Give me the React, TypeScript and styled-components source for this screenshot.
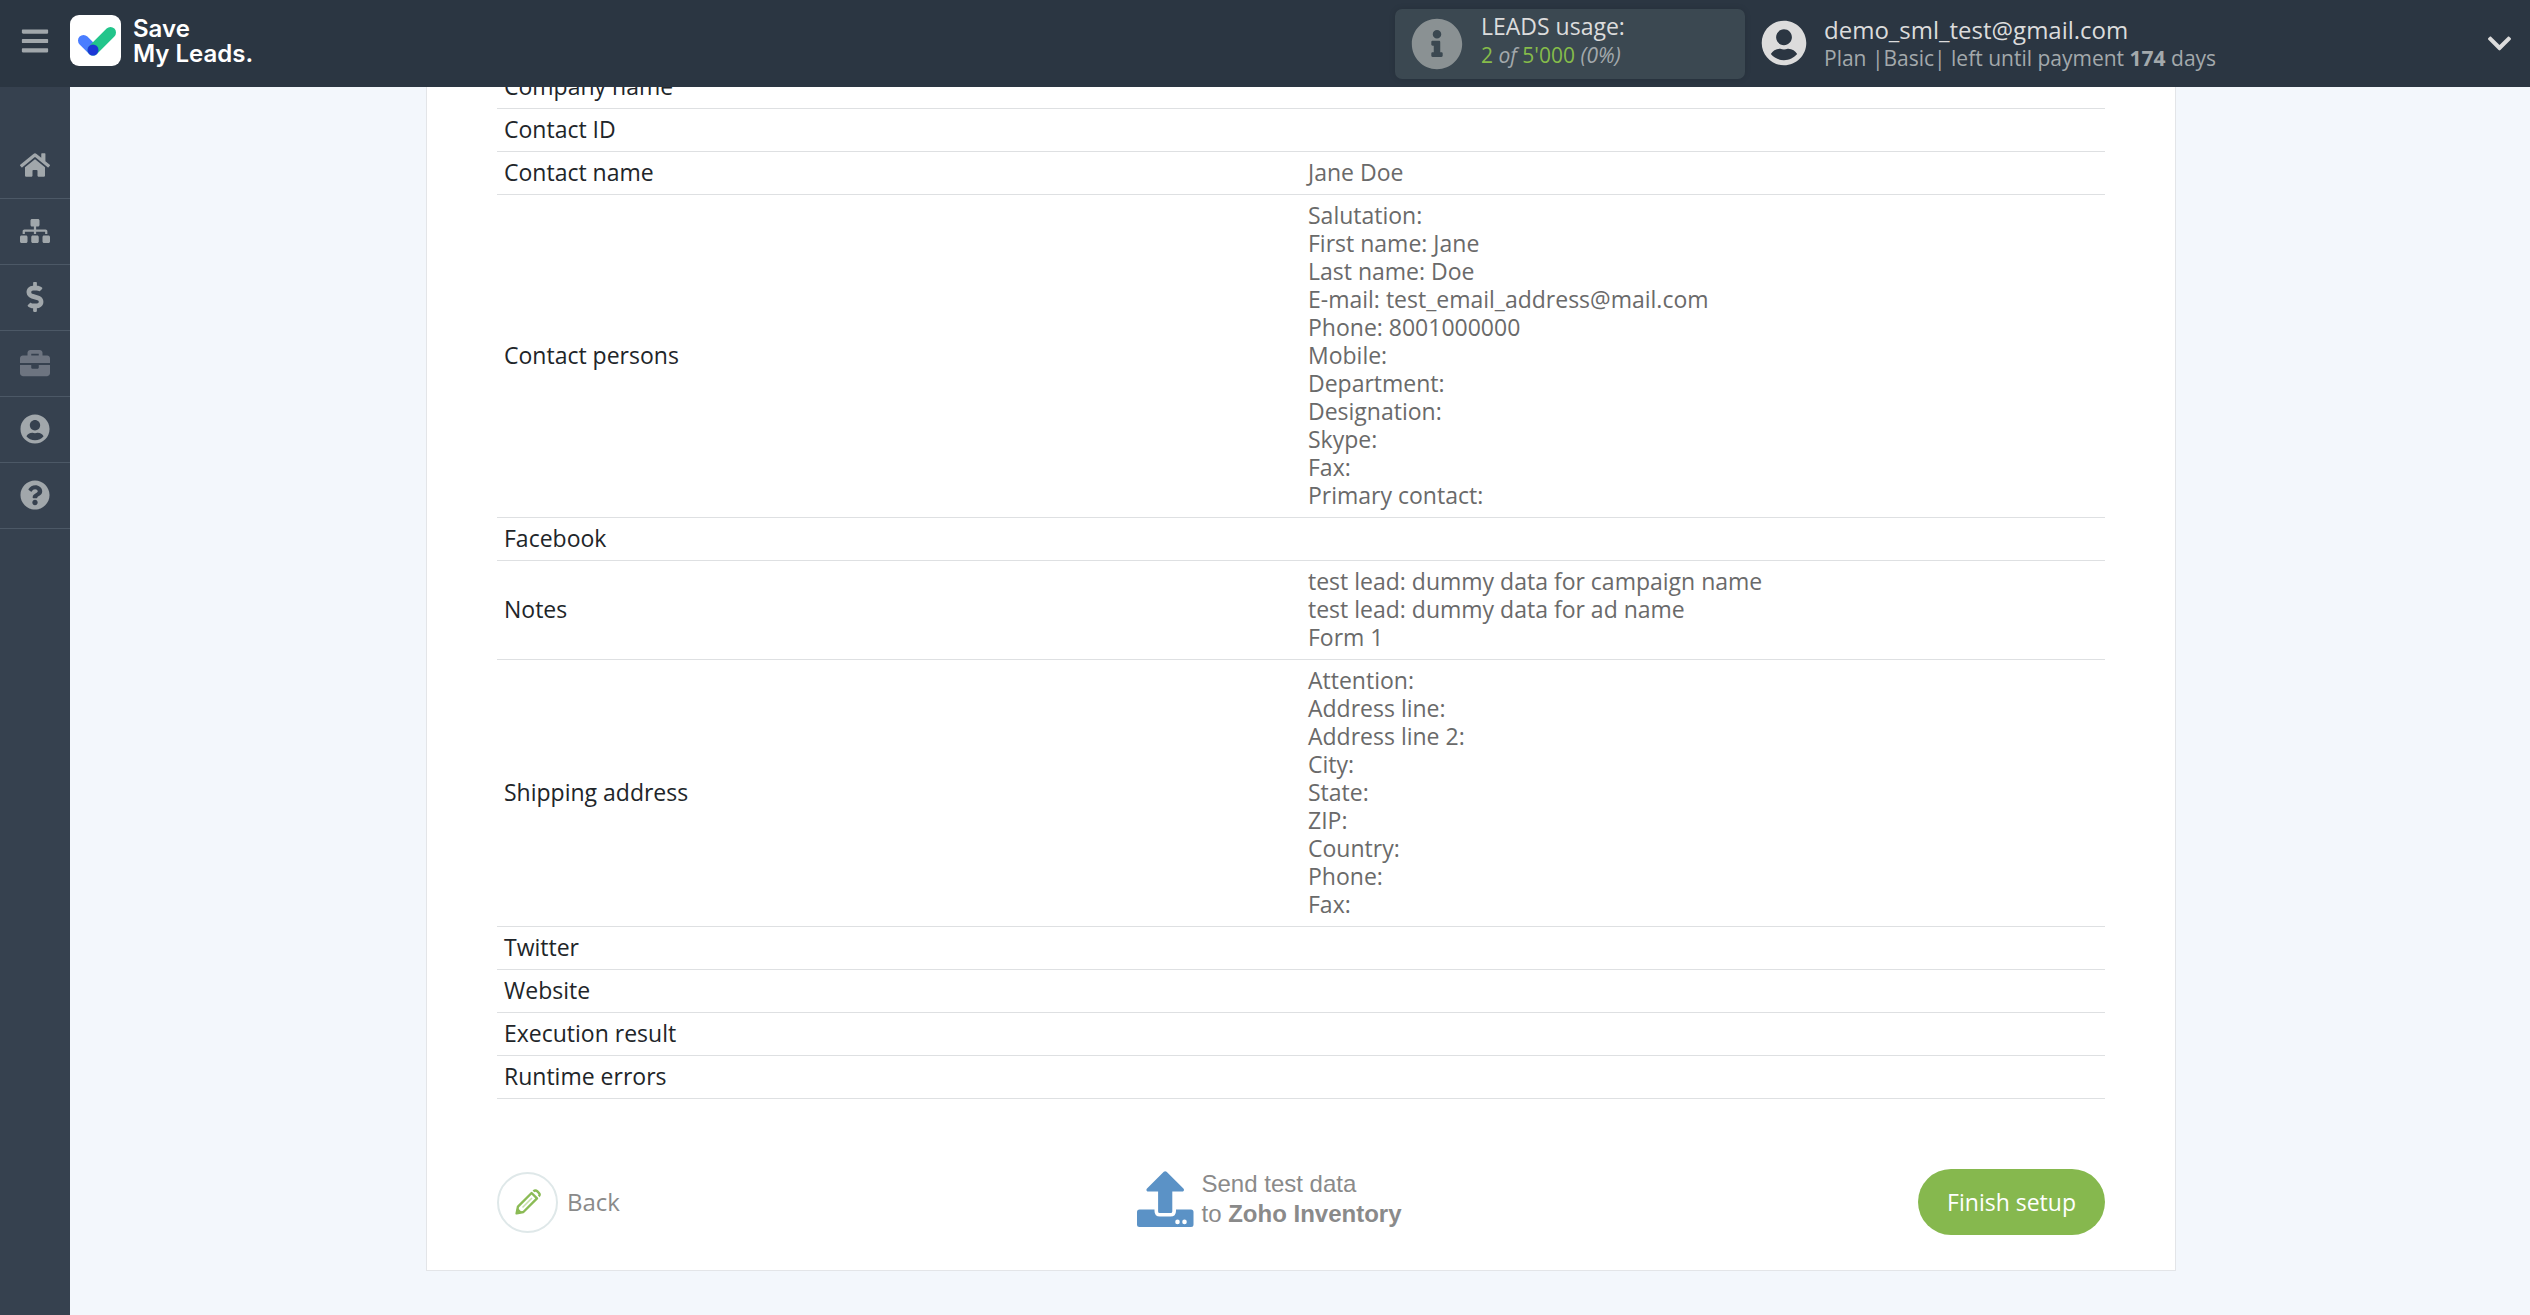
import React from 'react';
import styled, { createGlobalStyle } from 'styled-components';
import {
  FaBars,
  FaBriefcase,
  FaChevronDown,
  FaDollarSign,
  FaHome,
  FaInfoCircle,
  FaQuestionCircle,
  FaSitemap,
  FaUserCircle,
} from 'react-icons/fa';

const GlobalStyle = createGlobalStyle`
  *, *::before, *::after { box-sizing: border-box; }
  body {
    margin: 0;
    background: #f3f7fc;
    font-family: 'Open Sans', 'Noto Sans', sans-serif;
    font-size: 23px;
    line-height: 28px;
    color: #212529;
  }
  button { font: inherit; border: 0; background: none; padding: 0; cursor: pointer; }
  a { color: inherit; text-decoration: none; }
`;

const Page = styled.div`
  display: flex;
  flex-direction: column;
  height: 100vh;
`;

const Header = styled.header`
  display: flex;
  align-items: center;
  justify-content: space-between;
  flex: none;
  height: 87px;
  background: #2b3642;
  color: #dcdcdc;
`;

const Brand = styled.div`
  display: flex;
  align-items: center;
  height: 100%;
  padding-bottom: 6px;
`;

const IconButton = styled.button<{ $width: number; $size: number; $color: string }>`
  display: flex;
  align-items: center;
  justify-content: center;
  width: ${(p) => p.$width}px;
  height: 60px;
  color: ${(p) => p.$color};
  svg { height: ${(p) => p.$size}px; width: auto; }
`;

const LogoLink = styled.a`
  display: flex;
  align-items: center;
  gap: 12px;
  font-family: Inter, 'Open Sans', sans-serif;
  font-size: 24px;
  font-weight: 600;
  line-height: 25px;
  color: #fff;
  svg { width: 51px; height: 51px; }
`;

const HeaderInfo = styled.div`
  display: flex;
  align-items: center;
  width: 1135px;
  height: 100%;
`;

const Usage = styled.section`
  display: flex;
  align-items: center;
  gap: 18px;
  width: 350px;
  height: 70px;
  padding-left: 16px;
  border-radius: 7px;
  background: #3b4851;
  box-shadow: 0 0 6px rgba(0, 0, 0, 0.12);
  svg { height: 52px; width: auto; color: #8a9193; }
`;

const UsageText = styled.div`
  padding-bottom: 6px;
`;

const Account = styled.section`
  display: flex;
  align-items: center;
  flex: 1;
  gap: 17px;
  padding: 0 0 2px 16px;
  svg { height: 46px; width: auto; }
`;

const AccountText = styled.div`
  padding-top: 3px;
`;

const Line = styled.div<{ $size: number; $color?: string }>`
  font-size: ${(p) => p.$size}px;
  line-height: 29px;
  color: ${(p) => p.$color ?? 'inherit'};
  white-space: pre;
`;

const Green = styled.span`
  color: #86bc4a;
`;

const Body = styled.div`
  display: flex;
  flex: 1;
  min-height: 0;
`;

const Sidebar = styled.nav`
  flex: none;
  width: 70px;
  padding-top: 46px;
  background: #36414f;
`;

const SideLink = styled.a<{ $dim?: boolean }>`
  display: flex;
  align-items: center;
  justify-content: center;
  height: 66px;
  padding-bottom: 2px;
  border-bottom: 1px solid #4c5866;
  color: ${(p) => (p.$dim ? '#6d7480' : '#a1a7ab')};
  svg { height: 30px; width: auto; }
`;

const Main = styled.main`
  display: flex;
  flex: 1;
  flex-direction: column;
  align-items: center;
  justify-content: flex-end;
  overflow: hidden;
  padding: 0 0 44px 2px;
`;

const Card = styled.section`
  flex: none;
  width: 100%;
  max-width: 1750px;
  padding: 70px 70px 35px;
  border: 1px solid #e3e5e8;
  background: #fff;
`;

const DataTable = styled.table`
  width: 100%;
  border-collapse: separate;
  border-spacing: 0;
  table-layout: fixed;
`;

const Label = styled.th`
  width: 50%;
  height: 43px;
  padding: 6px 7px 8px;
  border-bottom: 1px solid #dee0e2;
  font-weight: 400;
  text-align: left;
  vertical-align: middle;
`;

const Value = styled.td`
  padding: 6px 7px 8px;
  border-bottom: 1px solid #dee0e2;
  color: #6a6a6a;
  white-space: pre-line;
`;

const Actions = styled.footer`
  display: flex;
  align-items: center;
  justify-content: space-between;
  margin-top: 70px;
`;

const BackButton = styled.button`
  display: flex;
  align-items: center;
  gap: 9px;
  font-size: 24px;
  color: #8a8a8a;
`;

const Circle = styled.span`
  display: flex;
  align-items: center;
  justify-content: center;
  width: 61px;
  height: 61px;
  border: 2px solid #dfe8e9;
  border-radius: 50%;
`;

const SendButton = styled.button`
  display: flex;
  align-items: center;
  align-self: flex-start;
  gap: 8px;
  font-family: 'Liberation Sans', Arial, sans-serif;
  font-size: 24px;
  line-height: 30px;
  text-align: left;
  color: #8a8a8a;
`;

const FinishButton = styled.button`
  height: 66px;
  padding: 0 29px;
  border-radius: 33px;
  background: #86b84e;
  color: #fff;
`;

const menu = [
  { name: 'Home', icon: <FaHome /> },
  { name: 'Connections', icon: <FaSitemap /> },
  { name: 'Billing', icon: <FaDollarSign /> },
  { name: 'Business', icon: <FaBriefcase />, dim: true },
  { name: 'Profile', icon: <FaUserCircle /> },
  { name: 'Help', icon: <FaQuestionCircle /> },
];

const rows: { label: string; value?: string[] }[] = [
  { label: 'Company name' },
  { label: 'Contact ID' },
  { label: 'Contact name', value: ['Jane Doe'] },
  {
    label: 'Contact persons',
    value: [
      'Salutation:',
      'First name: Jane',
      'Last name: Doe',
      'E-mail: test_email_address@mail.com',
      'Phone: 8001000000',
      'Mobile:',
      'Department:',
      'Designation:',
      'Skype:',
      'Fax:',
      'Primary contact:',
    ],
  },
  { label: 'Facebook' },
  {
    label: 'Notes',
    value: [
      'test lead: dummy data for campaign name',
      'test lead: dummy data for ad name',
      'Form 1',
    ],
  },
  {
    label: 'Shipping address',
    value: [
      'Attention:',
      'Address line:',
      'Address line 2:',
      'City:',
      'State:',
      'ZIP:',
      'Country:',
      'Phone:',
      'Fax:',
    ],
  },
  { label: 'Twitter' },
  { label: 'Website' },
  { label: 'Execution result' },
  { label: 'Runtime errors' },
];

const LogoMark = () => (
  <svg viewBox="0 0 51 51" aria-hidden="true">
    <rect width="51" height="51" rx="9" fill="#fff" />
    <g fill="none" strokeLinecap="round" strokeWidth="11">
      <path d="M13.5 25.5L23 35" stroke="#4a7dff" />
      <path d="M23 35L40.5 17.5" stroke="#22c58b" />
    </g>
    <circle cx="23" cy="35" r="5.5" fill="#1c37d6" />
  </svg>
);

const Pencil = () => (
  <svg width="26" height="26" viewBox="0 0 26 26" fill="none" stroke="#8bbb55" aria-hidden="true">
    <path d="M1.6 24.4L3 17.6L16.6 4L22 9.4L8.4 23Z" strokeWidth="2.4" strokeLinejoin="round" />
    <path d="M1 25L2.2 18.5L7.5 23.8Z" fill="#8bbb55" stroke="none" />
    <path d="M7.5 18.5L17 9" strokeWidth="1.6" stroke="#c7e0ab" />
    <path d="M18.4 2.4Q20.4 .4 22.4 2.4L23.8 3.8Q25.6 5.6 23.8 7.4" strokeWidth="2.4" />
  </svg>
);

const Upload = () => (
  <svg width="57" height="57" viewBox="0 0 57 57" fill="#5b92c6" aria-hidden="true">
    <path d="M26.8 .8Q28.2 -.5 29.6 .8L46.4 17.6Q47.8 19.4 46 20.6H35.3V40.5Q35.3 42 33.8 42H22.6Q21.1 42 21.1 40.5V20.6H10.4Q8.6 19.4 10 17.6Z" />
    <path
      fillRule="evenodd"
      d="M2.5 38.5H17.5V40Q17.5 45.5 23 45.5H33.5Q39 45.5 39 40V38.5H54Q56.5 38.5 56.5 41V53.5Q56.5 56 54 56H2.5Q0 56 0 53.5V41Q0 38.5 2.5 38.5ZM40.5 48.6A2.3 2.3 0 1 0 40.5 53.2A2.3 2.3 0 1 0 40.5 48.6ZM47.5 48.6A2.3 2.3 0 1 0 47.5 53.2A2.3 2.3 0 1 0 47.5 48.6Z"
    />
  </svg>
);

export default function App() {
  return (
    <Page>
      <GlobalStyle />
      <Header>
        <Brand>
          <IconButton $width={70} $size={30} $color="#a1a7ab" aria-label="Toggle menu">
            <FaBars />
          </IconButton>
          <LogoLink href="#">
            <LogoMark />
            <span>
              Save
              <br />
              My Leads.
            </span>
          </LogoLink>
        </Brand>
        <HeaderInfo>
          <Usage>
            <FaInfoCircle />
            <UsageText>
              <Line $size={23}>LEADS usage:</Line>
              <Line $size={21} $color="#a3a9ac">
                <Green>2</Green> <em>of</em> <Green>5'000</Green> <em>(0%)</em>
              </Line>
            </UsageText>
          </Usage>
          <Account>
            <FaUserCircle />
            <AccountText>
              <Line $size={24}>demo_sml_test@gmail.com</Line>
              <Line $size={21} $color="#a3a9ac">
                Plan |Basic| left until payment <b>174</b> days
              </Line>
            </AccountText>
          </Account>
          <IconButton $width={62} $size={27} $color="#dcdcdc" aria-label="Account menu">
            <FaChevronDown />
          </IconButton>
        </HeaderInfo>
      </Header>
      <Body>
        <Sidebar>
          {menu.map((item) => (
            <SideLink key={item.name} href="#" aria-label={item.name} $dim={item.dim}>
              {item.icon}
            </SideLink>
          ))}
        </Sidebar>
        <Main>
          <Card>
            <DataTable>
              <tbody>
                {rows.map((row) => (
                  <tr key={row.label}>
                    <Label scope="row">{row.label}</Label>
                    <Value>{row.value?.join('\n')}</Value>
                  </tr>
                ))}
              </tbody>
            </DataTable>
            <Actions>
              <BackButton>
                <Circle>
                  <Pencil />
                </Circle>
                Back
              </BackButton>
              <SendButton>
                <Upload />
                <span>
                  Send test data
                  <br />
                  to <b>Zoho Inventory</b>
                </span>
              </SendButton>
              <FinishButton>Finish setup</FinishButton>
            </Actions>
          </Card>
        </Main>
      </Body>
    </Page>
  );
}
